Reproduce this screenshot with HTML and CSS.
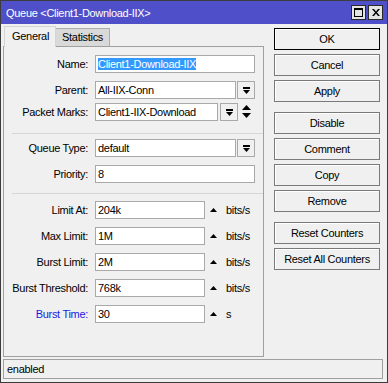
FILE: index.html
```html
<!DOCTYPE html>
<html>
<head>
<meta charset="utf-8">
<title>Queue</title>
<link rel="stylesheet" href="styles.css">
</head>
<body>
<div class="window">
  <div class="titlebar">
    <span class="title">Queue &lt;Client1-Download-IIX&gt;</span>
    <div class="tb-btns">
      <span class="tb-btn"><svg width="9" height="9" viewBox="0 0 9 9"><rect x="0.5" y="0.5" width="8" height="8" fill="none" stroke="#000"/><rect x="0" y="0" width="9" height="2" fill="#000"/></svg></span>
      <span class="tb-btn"><svg width="8" height="7" viewBox="0 0 8 7"><path d="M0 0h2l2 2.5 2-2.5h2l-3 3.5 3 3.5h-2l-2-2.5-2 2.5h-2l3-3.5z" fill="#000"/></svg></span>
    </div>
  </div>
  <div class="main">
    <div class="left">
      <div class="tabs">
        <div class="tab active">General</div>
        <div class="tab">Statistics</div>
      </div>
      <div class="panel">
        <div class="group">
          <div class="row">
            <label class="label">Name:</label>
            <div class="input w-full"><span class="sel">Client1-Download-IIX</span></div>
          </div>
          <div class="row">
            <label class="label">Parent:</label>
            <div class="input w-combo">All-IIX-Conn</div>
            <span class="drop"><svg width="7" height="7" viewBox="0 0 7 7"><rect x="0" y="0" width="7" height="2"/><polygon points="0,3 7,3 3.5,7"/></svg></span>
          </div>
          <div class="row tight">
            <label class="label">Packet Marks:</label>
            <div class="input w-marks">Client1-IIX-Download</div>
            <span class="drop drop-gap"><svg width="7" height="7" viewBox="0 0 7 7"><rect x="0" y="0" width="7" height="2"/><polygon points="0,3 7,3 3.5,7"/></svg></span>
            <span class="updown"><svg width="9" height="14" viewBox="0 0 9 14"><polygon points="4.5,0 9,5 0,5"/><polygon points="0,8 9,8 4.5,13"/></svg></span>
          </div>
        </div>
        <div class="sep sep-a"></div>
        <div class="group">
          <div class="row">
            <label class="label">Queue Type:</label>
            <div class="input w-combo">default</div>
            <span class="drop"><svg width="7" height="7" viewBox="0 0 7 7"><rect x="0" y="0" width="7" height="2"/><polygon points="0,3 7,3 3.5,7"/></svg></span>
          </div>
          <div class="row">
            <label class="label">Priority:</label>
            <div class="input w-full">8</div>
          </div>
        </div>
        <div class="sep sep-b"></div>
        <div class="group">
          <div class="row">
            <label class="label">Limit At:</label>
            <div class="input w-rate">204k</div>
            <span class="up"><svg width="7" height="4" viewBox="0 0 7 4"><polygon points="3.5,0 7,4 0,4"/></svg></span>
            <span class="unit">bits/s</span>
          </div>
          <div class="row">
            <label class="label">Max Limit:</label>
            <div class="input w-rate">1M</div>
            <span class="up"><svg width="7" height="4" viewBox="0 0 7 4"><polygon points="3.5,0 7,4 0,4"/></svg></span>
            <span class="unit">bits/s</span>
          </div>
          <div class="row">
            <label class="label">Burst Limit:</label>
            <div class="input w-rate">2M</div>
            <span class="up"><svg width="7" height="4" viewBox="0 0 7 4"><polygon points="3.5,0 7,4 0,4"/></svg></span>
            <span class="unit">bits/s</span>
          </div>
          <div class="row">
            <label class="label">Burst Threshold:</label>
            <div class="input w-rate">768k</div>
            <span class="up"><svg width="7" height="4" viewBox="0 0 7 4"><polygon points="3.5,0 7,4 0,4"/></svg></span>
            <span class="unit">bits/s</span>
          </div>
          <div class="row">
            <label class="label blue">Burst Time:</label>
            <div class="input w-rate">30</div>
            <span class="up"><svg width="7" height="4" viewBox="0 0 7 4"><polygon points="3.5,0 7,4 0,4"/></svg></span>
            <span class="unit">s</span>
          </div>
        </div>
      </div>
    </div>
    <div class="actions">
      <div class="btn-group">
        <div class="btn default">OK</div>
        <div class="btn">Cancel</div>
        <div class="btn">Apply</div>
      </div>
      <div class="btn-group">
        <div class="btn">Disable</div>
        <div class="btn">Comment</div>
        <div class="btn">Copy</div>
        <div class="btn">Remove</div>
      </div>
      <div class="btn-group">
        <div class="btn">Reset Counters</div>
        <div class="btn">Reset All Counters</div>
      </div>
    </div>
  </div>
  <div class="status">enabled</div>
</div>
</body>
</html>
```

FILE: styles.css
```css
*{
  margin:0;
  padding:0;
  box-sizing:border-box;
}
body{
  width:388px;
  height:383px;
  background:#f0f0f0;
  font-family:"Liberation Sans", Arial, sans-serif;
  font-size:11px;
  letter-spacing:-0.3px;
  color:#000;
}
.window{
  width:388px;
  height:383px;
  border:1px solid #3c3c3c;
  display:flex;
  flex-direction:column;
  background:#f0f0f0;
}
.titlebar{
  height:23px;
  flex:none;
  background:#4f4fca;
  color:#fff;
  display:flex;
  align-items:center;
  justify-content:space-between;
  padding:0 4px 0 5px;
}
.tb-btns{
  display:flex;
  gap:2px;
}
.tb-btn{
  width:15px;
  height:15px;
  background:#e4e4e4;
  border:1px solid #2a2a2a;
  display:flex;
  align-items:center;
  justify-content:center;
}
.main{
  flex:none;
  display:flex;
  gap:10px;
  padding:2px 0 0 2px;
}
.left{
  width:261px;
  display:flex;
  flex-direction:column;
}
.tabs{
  height:20px;
  display:flex;
  align-items:flex-end;
  padding-left:1px;
}
.tab{
  height:18px;
  padding:0 6px;
  line-height:17px;
  background:#d9d9d9;
  border:1px solid #adadad;
  border-bottom:none;
  border-left:none;
}
.tab.active{
  height:21px;
  margin-bottom:-1px;
  line-height:19px;
  padding:0 6px 0 7px;
  background:#f0f0f0;
  border:1px solid #d4d4d4;
  border-bottom:none;
  position:relative;
  z-index:1;
}
.panel{
  height:311px;
  border:1px solid #a0a0a0;
  padding-top:8px;
}
.group{
  display:flex;
  flex-direction:column;
  gap:8px;
}
.row{
  display:flex;
  align-items:center;
  height:18px;
}
.row.tight{
  margin-top:-4px;
}
.label{
  width:84px;
  margin-right:7px;
  text-align:right;
}
.label.blue{
  color:#1a1ae6;
}
.input{
  height:18px;
  background:#fff;
  border:1px solid #a9a9a9;
  padding-left:2px;
  line-height:16px;
  white-space:nowrap;
  overflow:hidden;
}
.w-full{ width:160px; }
.w-combo{ width:141px; }
.w-marks{ width:123px; }
.w-rate{ width:110px; }
.sel{
  background:#3399ff;
  color:#fff;
}
.drop{
  width:18px;
  height:18px;
  margin-left:1px;
  border:1px solid #a9a9a9;
  background:#f0f0f0;
  display:flex;
  align-items:center;
  justify-content:center;
}
.drop-gap{
  margin-left:2px;
}
.updown{
  margin-left:4px;
  display:flex;
}
.up{
  margin-left:5px;
  display:flex;
}
.unit{
  margin-left:9px;
}
.sep{
  height:1px;
  background:#d6d6d6;
  margin-left:8px;
}
.sep-a{
  margin-top:12px;
  margin-bottom:5px;
}
.sep-b{
  margin-top:10px;
  margin-bottom:7px;
}
.actions{
  width:106px;
  padding-top:2px;
  display:flex;
  flex-direction:column;
  gap:10px;
}
.btn-group{
  display:flex;
  flex-direction:column;
  gap:4px;
}
.btn{
  height:22px;
  line-height:20px;
  text-align:center;
  background:#f0f0f0;
  border:1px solid #7a7a7a;
  box-shadow:inset 1px 1px 0 #fff;
}
.btn.default{
  border-color:#000;
}
.status{
  margin:2px 4px 3px 2px;
  height:20px;
  border:1px solid #a0a0a0;
  padding-left:3px;
  line-height:18px;
}
```
